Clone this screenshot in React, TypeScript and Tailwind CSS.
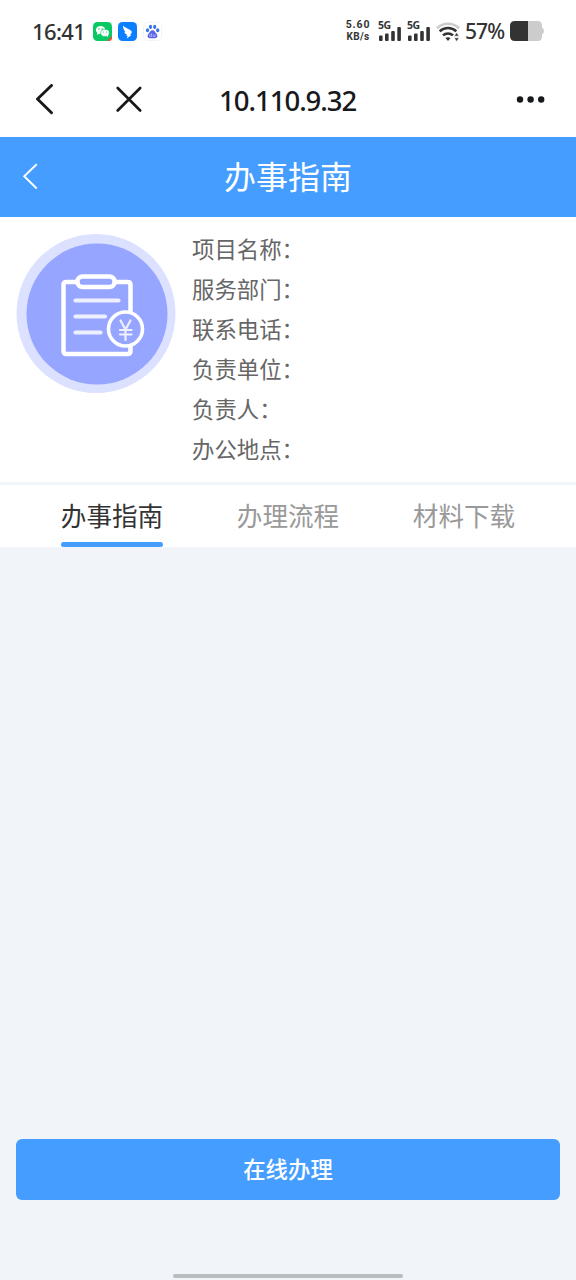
import { useState } from "react";
import clsx from "clsx";

const FIELDS = ["项目名称", "服务部门", "联系电话", "负责单位", "负责人", "办公地点"];

const TABS = ["办事指南", "办理流程", "材料下载"];

export default function App() {
  const [active, setActive] = useState(0);

  return (
    <div className="flex h-[1280px] w-[576px] flex-col overflow-hidden bg-[#f1f5f9] font-['Noto_Sans','Noto_Sans_CJK_SC',sans-serif]">
      <div className="bg-white">
        <StatusBar />
        <BrowserBar />
      </div>

      <header className="grid h-20 shrink-0 grid-cols-[60px_1fr_60px] items-center bg-[#459eff] text-white">
        <button aria-label="返回" className="pl-[22px]">
          <svg className="h-7 w-4" viewBox="0 0 16 28" fill="none" stroke="currentColor" strokeWidth="1.9">
            <path d="M14.7 1.2 2.2 13.2l12.5 12.3" />
          </svg>
        </button>
        <h1 className="pb-[5px] text-center font-['Noto_Sans_CJK_SC',sans-serif] text-[32px] leading-none">
          办事指南
        </h1>
      </header>

      <section className="flex h-[265px] shrink-0 gap-4 bg-white px-4 pt-[11px]">
        <GuideIcon />
        <ul className="font-['Noto_Sans_CJK_SC',sans-serif] text-[22.4px] text-[#666]">
          {FIELDS.map((f) => (
            <li key={f} className="h-10 leading-10">
              {f}：
            </li>
          ))}
        </ul>
      </section>

      <nav className="mt-[3px] flex h-[62px] shrink-0 justify-around bg-white px-6">
        {TABS.map((tab, i) => (
          <button
            key={tab}
            onClick={() => setActive(i)}
            className={clsx(
              "flex flex-col justify-between font-['Noto_Sans_CJK_SC',sans-serif] text-[25.6px]",
              i === active ? "text-[#333]" : "text-[#999]"
            )}
          >
            <span className="h-[57px] leading-[60px]">{tab}</span>
            <span className={clsx("h-[5px] w-full rounded-full", i === active && "bg-[#459eff]")} />
          </button>
        ))}
      </nav>

      <footer className="mt-auto flex flex-col items-center px-4">
        <button className="h-[61px] w-full rounded-md bg-[#459eff] pb-0.5 font-['Noto_Sans_CJK_SC',sans-serif] text-[22.4px] font-medium text-white">
          在线办理
        </button>
        <div className="mt-[74px] mb-[2px] h-1 w-[230px] rounded-full bg-[#b8bdc0]" />
      </footer>
    </div>
  );
}

function StatusBar() {
  return (
    <div className="flex h-[62px] items-center pr-8 pl-8 text-[#333]">
      <span className="w-[61px] text-[22px] font-medium tracking-[-0.6px]">16:41</span>
      <div className="flex items-center gap-[6px]">
        <WechatIcon />
        <BirdIcon />
        <PawIcon />
      </div>
      <div className="ml-auto flex items-center">
        <div className="mr-[8px] flex w-6 flex-col items-center font-['Roboto',sans-serif] text-[10px] leading-[12px] font-bold">
          <span className="text-[10.5px] tracking-[0.9px]">5.60</span>
          <span className="tracking-[0.3px]">KB/s</span>
        </div>
        <Signal />
        <Signal />
        <svg className="mt-[1px] h-5 w-6" viewBox="0 0 24 20" fill="none" strokeWidth="2.6">
          <path d="M1 6.2C7 .3 17 .3 23 6.2" stroke="#ccc" />
          <path d="M3.700 9.400c4.600-4.500 12-4.500 16.600 0" stroke="#333" />
          <path d="M7 13.400c2.800-2.600 7.200-2.600 10 0" stroke="#333" />
          <path d="m9.500 16 2.500 3 2.500-3c-1.500-1-3.500-1-5 0Z" fill="#333" />
          <path d="M20.600 10.500l2.700 3.700h-5.400zM20.600 19.500l2.700-3.700h-5.400z" fill="#333" stroke="#fff" strokeWidth=".8" />
        </svg>
        <span className="mt-[2px] w-[50px] pl-[5px] text-[21px] font-medium tracking-[-0.9px]">57%</span>
        <svg className="h-5 w-[34px]" viewBox="0 0 34 20">
          <path d="M18 0h9.500Q32 0 32 4.500v2q2 1 2 3.500t-2 3.500v2q0 4.500-4.500 4.500H18z" fill="#ccc" />
          <path d="M18 0H5Q0 0 0 5v10q0 5 5 5h13z" fill="#333" />
        </svg>
      </div>
    </div>
  );
}

function Signal() {
  return (
    <div className="relative mr-[6px] h-5 w-[23px]">
      <span className="absolute top-0 left-0 text-[10.500px] leading-[9px] font-bold tracking-[-0.5px]">5G</span>
      <svg className="h-5 w-[23px]" viewBox="0 0 23 20" fill="#333">
        <rect x="1" y="14.500" width="3.600" height="5.500" rx="1" />
        <rect x="7" y="12.500" width="3.600" height="7.500" rx="1" />
        <rect x="13.200" y="10" width="3.600" height="10" rx="1" />
        <rect x="19.300" y="6" width="3.600" height="14" rx="1" />
      </svg>
    </div>
  );
}

function WechatIcon() {
  return (
    <svg className="size-[19px]" viewBox="0 0 19 19">
      <rect width="19" height="19" rx="4.500" fill="#08c963" />
      <path d="M19 14.500q0 4.500-4.500 4.500z" fill="#e0533d" stroke="#e0533d" />
      <ellipse cx="7.600" cy="8" rx="4.700" ry="4" fill="#fff" />
      <path d="m4.500 10-.6 3 2.600-1.500z" fill="#fff" />
      <ellipse cx="12" cy="10.900" rx="4.300" ry="3.600" fill="#fff" stroke="#08c963" strokeWidth=".7" />
      <path d="m13 13.500 2 1.500-.2-2.500z" fill="#fff" />
      <g fill="#08c963">
        <circle cx="6" cy="7" r=".7" />
        <circle cx="9.200" cy="7" r=".7" />
        <circle cx="10.600" cy="10" r=".6" />
        <circle cx="13.400" cy="10" r=".6" />
      </g>
    </svg>
  );
}

function BirdIcon() {
  return (
    <svg className="size-[19px]" viewBox="0 0 19 19">
      <rect width="19" height="19" rx="4.500" fill="#0b7fff" />
      <path d="M5.200 3.500c1.200 2 4.300 2.700 6.500 4.200 1.700 1.200 2.500 1.900 2 3l-1.500 2.200h1.300l-4.700 3.600.9-2.700H8.300l.6-1.200C7.400 12 6.600 10.800 6.300 9.700l1.200.2C5.900 8.200 4.800 6 5.200 3.500z" fill="#fff" />
    </svg>
  );
}

function PawIcon() {
  return (
    <svg className="size-[19px]" viewBox="0 0 19 19">
      <rect x=".5" y=".5" width="18" height="18" rx="4" fill="#fff" stroke="#f3f3f6" />
      <g fill="#3b74e8">
        <ellipse cx="4.500" cy="8.300" rx="1.600" ry="2" />
        <ellipse cx="7.500" cy="4.900" rx="1.600" ry="2.100" />
        <ellipse cx="11.700" cy="4.900" rx="1.600" ry="2.100" />
        <ellipse cx="14.700" cy="8.300" rx="1.600" ry="2" />
      </g>
      <path d="M9.500 8.300c2 0 2.600 2 3.800 3.200 1.800 1.600 1.300 4.700-1.100 4.700H6.800c-2.400 0-2.900-3.100-1.100-4.700C7 10.300 7.500 8.300 9.500 8.300z" fill="#5a62e8" />
      <path d="M8.600 11.500v3H7.400a1 1 0 0 1 0-2h1.200M10.300 12.300v2.200h1.800v-2.200" fill="none" stroke="#c9c5ff" strokeWidth=".7" />
    </svg>
  );
}

function BrowserBar() {
  return (
    <div className="flex h-[75px] items-center pr-[31px] pl-[35px] text-[#17191c]">
      <svg className="h-8 w-[18px]" viewBox="0 0 18 32" fill="none" stroke="currentColor" strokeWidth="2.900" strokeLinecap="round" strokeLinejoin="round">
        <path d="M16.500 1.500 2.500 15l14 13.800" />
      </svg>
      <svg className="ml-[62px] size-7" viewBox="0 0 28 28" fill="none" stroke="currentColor" strokeWidth="2.700" strokeLinecap="round">
        <path d="m2.700 2 22.500 22.500M25.200 2 2.700 24.500" />
      </svg>
      <span className="mt-[3px] ml-[76px] text-[27.500px] font-medium tracking-[-1px]">10.110.9.32</span>
      <svg className="ml-auto h-2 w-[29px]" viewBox="0 0 29 8" fill="currentColor">
        <circle cx="4" cy="3.500" r="3.200" />
        <circle cx="14.600" cy="3.500" r="3.200" />
        <circle cx="25.200" cy="3.500" r="3.200" />
      </svg>
    </div>
  );
}

// clipboard with a yuan coin
function GuideIcon() {
  return (
    <svg className="mt-[5px] size-40 shrink-0" viewBox="0 0 160 160" fill="none" stroke="#fff" strokeLinecap="round">
      <circle cx="80" cy="80.500" r="79.500" fill="#dbe1ff" stroke="none" />
      <circle cx="81" cy="81" r="70.500" fill="#96a5ff" stroke="none" />
      <path
        d="M114.500 79V52q0-3-3-3h-61q-3 0-3 3v66q0 3 3 3h61q3 0 3-3v-4"
        strokeWidth="4.500"
      />
      <rect x="61.500" y="43.500" width="37" height="10.500" rx="5" fill="#96a5ff" strokeWidth="4.500" />
      <path d="M59.500 67.500h43M59.500 83.500h29.500M59.500 99.500h25" stroke="#eef0ff" strokeWidth="4.200" />
      <circle cx="109.500" cy="96" r="17" fill="#96a5ff" strokeWidth="3.600" />
      <path d="m104.500 87.500 5 9 5-9M109.500 96.500v10.500M104 97h11.500M104 101.500h11.500" stroke="#eef0ff" strokeWidth="2.200" />
    </svg>
  );
}
